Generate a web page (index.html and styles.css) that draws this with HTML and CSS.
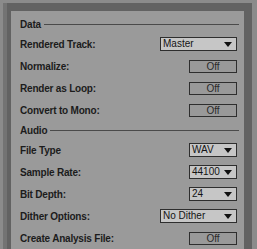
FILE: index.html
```html
<!DOCTYPE html>
<html>
<head>
<meta charset="utf-8">
<link rel="stylesheet" href="styles.css">
</head>
<body>
<div class="frame">
  <div class="panel">
    <div class="section"><span class="section-title">Data</span><span class="rule"></span></div>
    <div class="row"><span class="label">Rendered Track:</span><span class="select wide">Master<i class="arrow"></i></span></div>
    <div class="row"><span class="label">Normalize:</span><span class="toggle">Off</span></div>
    <div class="row"><span class="label">Render as Loop:</span><span class="toggle">Off</span></div>
    <div class="row"><span class="label">Convert to Mono:</span><span class="toggle">Off</span></div>
    <div class="section"><span class="section-title">Audio</span><span class="rule"></span></div>
    <div class="row"><span class="label">File Type</span><span class="select narrow">WAV<i class="arrow"></i></span></div>
    <div class="row"><span class="label">Sample Rate:</span><span class="select narrow">44100<i class="arrow"></i></span></div>
    <div class="row"><span class="label">Bit Depth:</span><span class="select narrow">24<i class="arrow"></i></span></div>
    <div class="row"><span class="label">Dither Options:</span><span class="select wide">No Dither<i class="arrow"></i></span></div>
    <div class="row"><span class="label">Create Analysis File:</span><span class="toggle">Off</span></div>
  </div>
</div>
</body>
</html>
```
FILE: styles.css
```css
html, body {
  margin: 0;
  height: 100%;
}
body {
  background: #8b8b8b;
  padding: 3px 5px 0 3px;
  box-sizing: border-box;
  font-family: "Liberation Sans", Arial, sans-serif;
  font-size: 10px;
  color: #1c1c1c;
  overflow: hidden;
}
.frame {
  background: #626262;
  border-left: 4px solid #737373;
  padding: 8px 8px 0 4px;
  height: 100%;
  box-sizing: border-box;
}
.panel {
  background: #9a9a9a;
  height: 100%;
  box-sizing: border-box;
  padding: 4px 7px 0 9px;
}
.section {
  height: 18px;
  display: flex;
  align-items: center;
}
.section-title {
  font-weight: bold;
  letter-spacing: -0.2px;
}
.rule {
  flex: 1;
  height: 1px;
  background: #4a4a4a;
  margin: 1px -2px 0 3px;
}
.row {
  height: 22px;
  display: flex;
  align-items: center;
  justify-content: space-between;
}
.label {
  font-weight: bold;
  letter-spacing: -0.2px;
}
.select {
  position: relative;
  box-sizing: border-box;
  height: 14px;
  background: #c6c6c6;
  border: 1px solid #2e2e2e;
  padding-left: 2px;
  line-height: 12px;
  color: #141414;
}
.select.wide { width: 77px; }
.select.narrow { width: 48px; }
.arrow {
  position: absolute;
  right: 4px;
  top: 4px;
  width: 0;
  height: 0;
  border-left: 4px solid transparent;
  border-right: 4px solid transparent;
  border-top: 5px solid #111;
}
.toggle {
  box-sizing: border-box;
  width: 48px;
  height: 13px;
  border: 1px solid #2e2e2e;
  background: #999999;
  text-align: center;
  line-height: 11px;
  color: #2a2a2a;
}
```
